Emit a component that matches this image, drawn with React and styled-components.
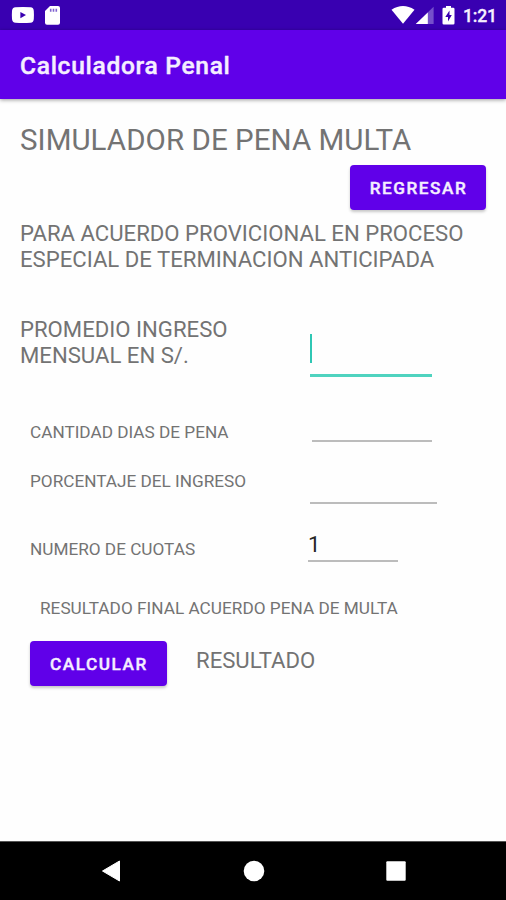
import React from 'react';
import styled, { createGlobalStyle } from 'styled-components';

const GlobalStyle = createGlobalStyle`
  * {
    box-sizing: border-box;
  }

  body {
    margin: 0;
    background-color: #fefefe;
    font-family: Roboto, 'Liberation Sans', sans-serif;
    overflow: hidden;
  }
`;

const Screen = styled.div`
  display: flex;
  flex-direction: column;
  width: 506px;
  height: 900px;
  background-color: #fefefe;
`;

const StatusBar = styled.div`
  display: flex;
  justify-content: space-between;
  height: 30px;
  padding: 0 10px 0 11px;
  background-color: #3900b1;
  color: #f6f0ff;
`;

const StatusIcons = styled.div`
  display: flex;
  align-items: flex-start;

  svg {
    display: block;
  }
`;

const SdCard = styled.svg`
  margin-left: 9px;
`;

const Battery = styled.svg`
  margin-left: 8px;
`;

const Time = styled.span`
  width: 33px;
  margin-left: 8px;
  font-size: 17.6px;
  font-weight: 500;
  line-height: 32px;
  letter-spacing: -0.2px;
  -webkit-text-stroke: 0.3px;
`;

const AppBar = styled.header`
  display: flex;
  align-items: center;
  height: 69px;
  padding: 2px 20px 0;
  background-color: #6000e9;
  box-shadow: 0 1px 4px rgba(0, 0, 0, 0.4);
`;

const AppTitle = styled.h1`
  margin: 0;
  color: #f5eeff;
  font-size: 24.6px;
  font-weight: 500;
  letter-spacing: 0.68px;
  -webkit-text-stroke: 0.4px;
`;

const Content = styled.main`
  display: flex;
  flex: 1;
  flex-direction: column;
  align-items: flex-start;
  padding: 23px 20px 0;
  color: #737373;
`;

const Title = styled.h2`
  margin: 0;
  font-size: 29.5px;
  font-weight: 400;
  line-height: 36px;
  letter-spacing: 0.05px;
  white-space: nowrap;
`;

const Button = styled.button`
  width: 137px;
  height: 45px;
  padding: 1px 0 0 1px;
  border: 0;
  border-radius: 4px;
  background-color: #6000e9;
  box-shadow: 0 2px 3px rgba(0, 0, 0, 0.22);
  color: #f5eeff;
  font-family: inherit;
  font-size: 17.2px;
  font-weight: 500;
  letter-spacing: 1.54px;
  -webkit-text-stroke: 0.4px;
`;

const BackButton = styled(Button)`
  align-self: flex-end;
  width: 136px;
  margin-top: 7px;
`;

const Subtitle = styled.p`
  margin: 10px 0 0;
  font-size: 22.15px;
  line-height: 26px;
  white-space: nowrap;
`;

const Row = styled.div`
  display: flex;
  align-items: flex-start;
  height: ${(props) => props.$height}px;
  margin-top: ${(props) => props.$top}px;
`;

const Label = styled.label`
  width: ${(props) => props.$width}px;
  padding-top: ${(props) => props.$offset || 0}px;
  padding-left: ${(props) => (props.$large ? 0 : 10)}px;
  font-size: ${(props) => (props.$large ? 22.15 : 17.2)}px;
  line-height: ${(props) => (props.$large ? 26 : 20)}px;
  white-space: nowrap;
`;

const Field = styled.div`
  position: relative;
  align-self: flex-end;
  width: ${(props) => props.$width}px;
  height: 44px;
  border-bottom: ${(props) => (props.$active ? '3px solid #4fd3bf' : '2px solid #bcbcbc')};
`;

const Input = styled.input`
  display: block;
  width: 100%;
  height: 40px;
  padding: 12px 0 0;
  border: 0;
  outline: 0;
  background: transparent;
  color: #262626;
  font-family: inherit;
  font-size: 22.15px;
  line-height: 26px;
`;

const Caret = styled.span`
  position: absolute;
  bottom: 11px;
  left: 0;
  width: 2px;
  height: 29px;
  background-color: #2fc7b4;
`;

const ResultTitle = styled.p`
  margin: 36px 0 0 20px;
  font-size: 17.2px;
  line-height: 20px;
  letter-spacing: 0.02px;
  white-space: nowrap;
`;

const ResultRow = styled.div`
  display: flex;
  align-items: flex-start;
  gap: 29px;
  margin: 23px 0 0 10px;
`;

const Result = styled.span`
  margin-top: 6px;
  font-size: 22.15px;
  line-height: 26px;
`;

const NavBar = styled.nav`
  display: flex;
  align-items: center;
  justify-content: space-between;
  height: 59px;
  padding: 0 99px 0 100px;
  border-top: 1px solid #555555;
  background-color: #000000;
`;

function App() {
  return (
    <>
      <GlobalStyle />
      <Screen>
        <StatusBar>
          <StatusIcons>
            <svg width="24" height="30" viewBox="0 0 24 30">
              <path
                d="M4.5 7.3Q12 6.6 19.5 7.3Q22.7 7.5 22.8 11Q23.1 15 22.8 19Q22.6 22.4 19.5 22.8Q12 23.4 4.5 22.8Q1.3 22.4 1 19Q.7 15 1 11Q1.2 7.6 4.5 7.3Z"
                fill="#fff"
              />
              <path d="M9.4 12L15 15.1L9.4 18.2Z" fill="#3900b1" />
            </svg>
            <SdCard width="16" height="30" viewBox="0 0 16 30">
              <path d="M6 6H14Q16 6 16 8V22.7Q16 24.7 14 24.7H3Q1 24.7 1 22.7V11Z" fill="#fff" />
              <path d="M5.9 8.7h1.6v3H5.9zM8.7 8.7h1.6v3H8.7zM11.5 8.7h1.6v3h-1.6z" fill="#8062d0" />
            </SdCard>
          </StatusIcons>
          <StatusIcons>
            <svg width="24" height="30" viewBox="0 0 24 30">
              <path d="M.5 9.7Q12 2.2 23.5 9.7L12 23.8Z" fill="#fff" />
            </svg>
            <svg width="19" height="30" viewBox="0 0 19 30">
              <path d="M18.6 6.8V24H.8Z" fill="#7550cb" />
              <path d="M12.8 12.5V24H.8Z" fill="#fff" />
            </svg>
            <Battery width="13" height="30" viewBox="0 0 13 30">
              <path
                d="M4 7.8V6H9V7.8H11.2Q12.5 7.8 12.5 9V23.3Q12.5 24.5 11.2 24.5H1.8Q.5 24.5 .5 23.3V9Q.5 7.8 1.8 7.8Z"
                fill="#fff"
              />
              <path d="M7.5 10.5L3.3 17H6V21.5L9.8 15H7.5Z" fill="#3900b1" />
            </Battery>
            <Time>1:21</Time>
          </StatusIcons>
        </StatusBar>
        <AppBar>
          <AppTitle>Calculadora Penal</AppTitle>
        </AppBar>

        <Content>
          <Title>SIMULADOR DE PENA MULTA</Title>
          <BackButton>REGRESAR</BackButton>
          <Subtitle>
            PARA ACUERDO PROVICIONAL EN PROCESO
            <br />
            ESPECIAL DE TERMINACION ANTICIPADA
          </Subtitle>

          <Row $top={44} $height={61}>
            <Label $large $width={290} htmlFor="ingreso">
              PROMEDIO INGRESO
              <br />
              MENSUAL EN S/.
            </Label>
            <Field $width={122} $active>
              <Input id="ingreso" />
              <Caret />
            </Field>
          </Row>
          <Row $top={21} $height={44}>
            <Label $width={292} $offset={24} htmlFor="dias">
              CANTIDAD DIAS DE PENA
            </Label>
            <Field $width={120}>
              <Input id="dias" />
            </Field>
          </Row>
          <Row $top={18} $height={44}>
            <Label $width={290} $offset={11} htmlFor="porcentaje">
              PORCENTAJE DEL INGRESO
            </Label>
            <Field $width={127}>
              <Input id="porcentaje" />
            </Field>
          </Row>
          <Row $top={14} $height={44}>
            <Label $width={288} $offset={21} htmlFor="cuotas">
              NUMERO DE CUOTAS
            </Label>
            <Field $width={90}>
              <Input id="cuotas" defaultValue="1" />
            </Field>
          </Row>

          <ResultTitle>RESULTADO FINAL ACUERDO PENA DE MULTA</ResultTitle>
          <ResultRow>
            <Button>CALCULAR</Button>
            <Result>RESULTADO</Result>
          </ResultRow>
        </Content>

        <NavBar>
          <svg width="22" height="22" viewBox="0 0 22 22">
            <path d="M19.5 1V21L2.5 11Z" fill="#fff" stroke="#fff" strokeLinejoin="round" />
          </svg>
          <svg width="22" height="22" viewBox="0 0 22 22">
            <circle cx="11" cy="11" r="10.3" fill="#fff" />
          </svg>
          <svg width="22" height="22" viewBox="0 0 22 22">
            <rect x="1.3" y="1.3" width="19.4" height="19.4" rx="1" fill="#fff" />
          </svg>
        </NavBar>
      </Screen>
    </>
  );
}

export default App;
